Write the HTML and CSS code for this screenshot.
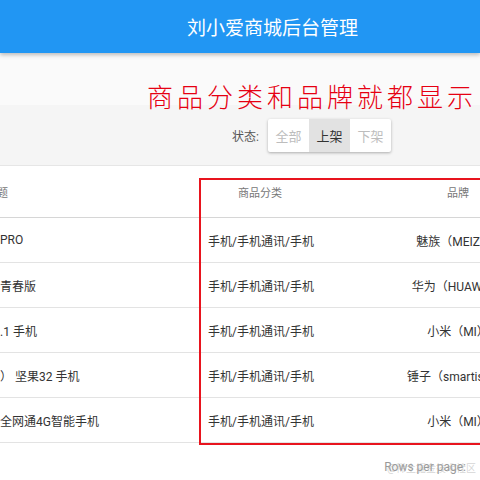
FILE: index.html
```html
<!DOCTYPE html>
<html>
  <head>
    <meta charset="utf-8">
    <link rel="stylesheet" href="styles.css">
    <title>刘小爱商城后台管理</title>
  </head>
  <body>
    <header class="app-bar">
      <h1 class="app-title">刘小爱商城后台管理</h1>
    </header>

    <main class="content">
      <p class="note">商品分类和品牌就都显示</p>

      <div class="spacer"></div>

      <div class="toolbar">
        <span class="status-label">状态:</span>
        <div class="toggle-group">
          <button class="toggle-button">全部</button>
          <button class="toggle-button toggle-active">上架</button>
          <button class="toggle-button">下架</button>
        </div>
      </div>

      <div class="table-card">
        <div class="table-wrap">
          <table class="goods-table">
            <colgroup>
              <col class="col-title">
              <col class="col-category">
              <col class="col-brand">
            </colgroup>
            <thead>
              <tr>
                <th class="th-title">标题</th>
                <th class="th-center">商品分类</th>
                <th class="th-center">品牌</th>
              </tr>
            </thead>
            <tbody>
              <tr>
                <td class="td-title">PRO</td>
                <td class="td-category">手机/手机通讯/手机</td>
                <td class="td-brand">魅族（MEIZU）</td>
              </tr>
              <tr>
                <td class="td-title">青春版</td>
                <td class="td-category">手机/手机通讯/手机</td>
                <td class="td-brand">华为（HUAWEI）</td>
              </tr>
              <tr>
                <td class="td-title">.1 手机</td>
                <td class="td-category">手机/手机通讯/手机</td>
                <td class="td-brand">小米（MI）</td>
              </tr>
              <tr>
                <td class="td-title">） 坚果32 手机</td>
                <td class="td-category">手机/手机通讯/手机</td>
                <td class="td-brand">锤子（smartisan）</td>
              </tr>
              <tr>
                <td class="td-title">全网通4G智能手机</td>
                <td class="td-category">手机/手机通讯/手机</td>
                <td class="td-brand">小米（MI）</td>
              </tr>
            </tbody>
          </table>
        </div>

        <div class="highlight-box"></div>

        <div class="table-footer">
          <span class="rows-label">Rows per page:</span>
          <span class="watermark">@稀土掘金技术社区</span>
        </div>
      </div>
    </main>
  </body>
</html>
```

FILE: styles.css
```css
body {
  margin: 0;
  font-family: Roboto, "Noto Sans CJK SC", sans-serif;
  background-color: #fafafa;
  color: #333;
  overflow: hidden;
}

.app-bar {
  height: 53px;
  background-color: #2196f3;
  box-shadow: 0 2px 4px rgba(0, 0, 0, 0.25);
  display: flex;
  align-items: center;
  justify-content: center;
  padding-left: 65px;
  position: relative;
  z-index: 2;
}

.app-title {
  margin: 0;
  color: white;
  font-size: 19px;
  font-weight: normal;
  white-space: nowrap;
}

.content {
  position: relative;
}

.note {
  position: absolute;
  top: 28px;
  left: 147px;
  margin: 0;
  font-family: "Noto Sans CJK SC", serif;
  font-size: 26px;
  font-weight: 300;
  line-height: 30px;
  letter-spacing: 4px;
  color: #e60012;
  white-space: nowrap;
  z-index: 3;
}

.spacer {
  height: 52px;
}

.toolbar {
  height: 60px;
  background-color: #f5f5f5;
  display: flex;
  align-items: center;
  padding-left: 232px;
  gap: 9px;
}

.status-label {
  font-size: 12px;
  color: #555;
}

.toggle-group {
  display: flex;
  background-color: white;
  border-radius: 2px;
  box-shadow: 0 1px 3px rgba(0, 0, 0, 0.3);
  overflow: hidden;
}

.toggle-button {
  border: none;
  background: none;
  height: 33px;
  width: 41px;
  padding: 0;
  font-family: Roboto, "Noto Sans CJK SC", sans-serif;
  font-size: 13px;
  color: #bdbdbd;
}

.toggle-active {
  background-color: #e2e2e2;
  color: #333;
}

.table-card {
  position: relative;
  background-color: white;
  border-top: 1px solid #e6e6e6;
  height: 320px;
}

.table-wrap {
  overflow: hidden;
}

.goods-table {
  table-layout: fixed;
  border-collapse: collapse;
  width: 596px;
  white-space: nowrap;
}

.col-title {
  width: 200px;
}

.col-category {
  width: 120px;
}

.col-brand {
  width: 276px;
}

.goods-table th {
  height: 51px;
  font-size: 11px;
  font-weight: normal;
  color: #777;
  border-bottom: 1px solid #d6d6d6;
  padding: 0;
}

.th-title {
  text-align: left;
  text-indent: -14px;
}

.th-center {
  text-align: center;
}

.goods-table td {
  height: 44px;
  font-size: 12px;
  border-bottom: 1px solid #e3e3e3;
  padding: 0;
  overflow: hidden;
}

.td-category {
  padding-left: 8px !important;
}

.td-brand {
  text-align: center;
}

.highlight-box {
  position: absolute;
  top: 12px;
  left: 199px;
  width: 320px;
  height: 263px;
  border: 2px solid #e8141e;
}

.table-footer {
  position: relative;
  height: 48px;
  display: flex;
  align-items: center;
  justify-content: flex-end;
  padding-right: 14px;
}

.rows-label {
  font-size: 12px;
  color: #999;
}

.watermark {
  position: absolute;
  right: 4px;
  font-size: 10px;
  color: rgba(170, 170, 170, 0.5);
  white-space: nowrap;
}
```
